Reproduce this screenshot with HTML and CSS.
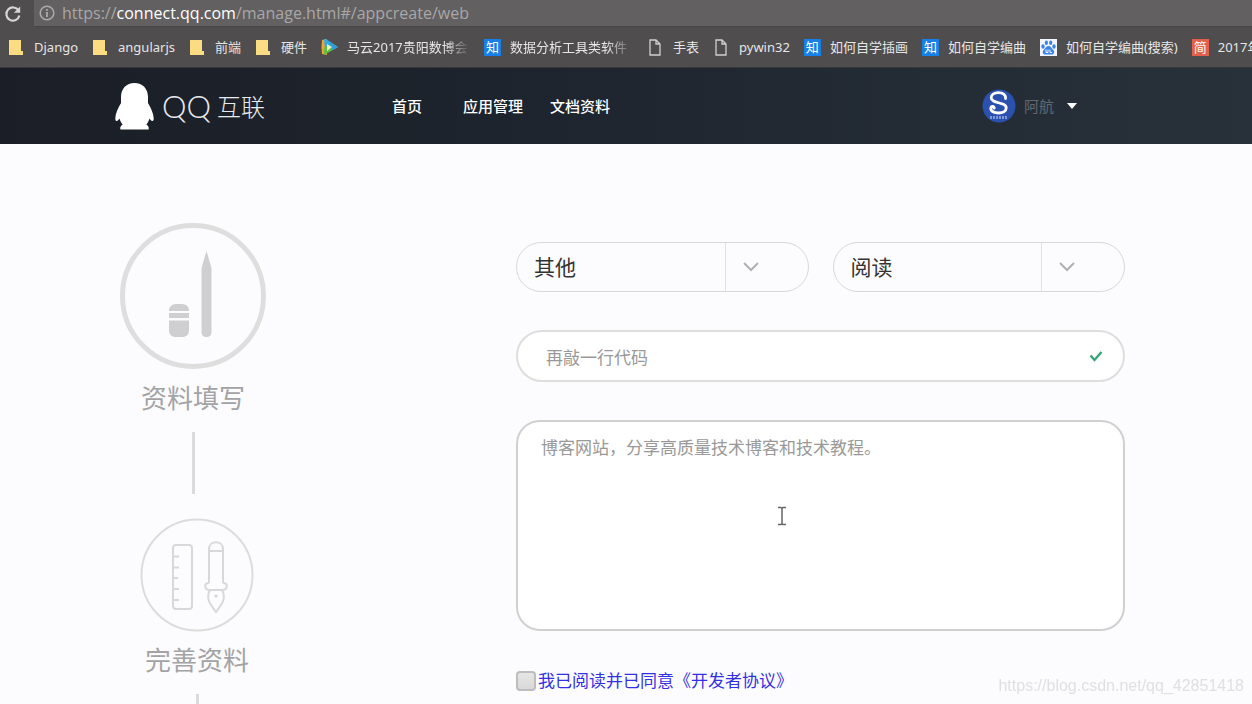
FILE: index.html
```html
<!DOCTYPE html>
<html lang="zh-CN">
<head>
<meta charset="utf-8">
<title>QQ互联</title>
<link rel="stylesheet" href="styles.css">
</head>
<body>
<div class="browser">
  <div class="toolbar">
    <button class="reload" type="button" aria-label="重新加载">
      <svg width="18" height="18" viewBox="0 0 18 18"><path d="M14.6 5.6A6.6 6.6 0 1 0 15.400 10.500" fill="none" stroke="#d6d6d6" stroke-width="2.200"/><path d="M16.200 1.500v6.300h-6.300z" fill="#d6d6d6"/></svg>
    </button>
    <div class="address">
      <svg width="16" height="16" viewBox="0 0 16 16"><circle cx="8" cy="8" r="6.800" fill="none" stroke="#adabac" stroke-width="1.500"/><path d="M8 7v5M8 4v1.800" stroke="#adabac" stroke-width="1.800"/></svg>
      <span class="url">https://<b>connect.qq.com</b>/manage.html#/appcreate/web</span>
    </div>
  </div>
  <nav class="bookmarks" aria-label="书签">
    <a href="#"><svg class="mark" viewBox="0 0 17 17"><path d="M1 1h12v11h2v4H1z" fill="#fbdc83"/></svg><span>Django</span></a>
    <a href="#"><svg class="mark" viewBox="0 0 17 17"><path d="M1 1h12v11h2v4H1z" fill="#fbdc83"/></svg><span>angularjs</span></a>
    <a href="#"><svg class="mark" viewBox="0 0 17 17"><path d="M1 1h12v11h2v4H1z" fill="#fbdc83"/></svg><span>前端</span></a>
    <a href="#"><svg class="mark" viewBox="0 0 17 17"><path d="M1 1h12v11h2v4H1z" fill="#fbdc83"/></svg><span>硬件</span></a>
    <a href="#"><svg class="mark" viewBox="0 0 17 17"><path d="M1 1Q0 8 1 15l5 1V0z" fill="#f0a52c"/><path d="M3 1Q2 0 5 0l6 4-7 6z" fill="#35a8e8"/><path d="M3 16l14-8-6-4-8 5z" fill="#63bd45"/><path d="M9 3l8 5-5 3-5-4z" fill="#2f9ade"/><path d="M6 5l5 3-5 4z" fill="#e8f5b9"/></svg><span class="faded">马云2017贵阳数博会</span></a>
    <a href="#"><i class="mark badge zhi">知</i><span class="faded">数据分析工具类软件</span></a>
    <a href="#"><svg class="mark" viewBox="0 0 17 17"><path d="M3 1h6l4 4v11H3zM9 1v4h4" fill="none" stroke="#d0d0d0" stroke-width="1.300"/></svg><span>手表</span></a>
    <a href="#"><svg class="mark" viewBox="0 0 17 17"><path d="M3 1h6l4 4v11H3zM9 1v4h4" fill="none" stroke="#d0d0d0" stroke-width="1.300"/></svg><span>pywin32</span></a>
    <a href="#"><i class="mark badge zhi">知</i><span>如何自学插画</span></a>
    <a href="#"><i class="mark badge zhi">知</i><span>如何自学编曲</span></a>
    <a href="#"><svg class="mark" viewBox="0 0 17 17"><path d="M0 0h17v17H0z" fill="#f2f6ff"/><g fill="#3b83e8"><ellipse cx="3" cy="7.500" rx="1.700" ry="2.200"/><ellipse cx="6.400" cy="3.800" rx="1.600" ry="2.300"/><ellipse cx="10.700" cy="3.800" rx="1.600" ry="2.300"/><ellipse cx="14" cy="7.500" rx="1.700" ry="2.200"/><path d="M8.500 7c2 0 3 2.200 4.600 3.700 2.300 2.400.6 5.200-1.800 4.900-2-.3-3.600-.3-5.600 0-2.500.3-4.100-2.500-1.800-4.900C5.500 9.200 6.500 7 8.500 7z"/></g><path d="M6 10.500v3h2v-3M10 10.500v3h2" fill="none" stroke="#f2f6ff"/></svg><span>如何自学编曲(搜索)</span></a>
    <a href="#"><i class="mark badge jian">简</i><span>2017年</span></a>
  </nav>
</div>

<header class="site-header">
  <a class="brand" href="#">
    <svg width="39" height="47" viewBox="0 0 39 47"><path d="M19.500 0C27.500 0 33 5.600 33 14v6c2.800 5 5.700 10.300 5.700 15.600 0 3-1.500 3.600-4.200-.1-.7 2.500-1.700 4.300-3.200 5.900 2.200 1.200 2.800 2.800 2.300 5.100H5.400c-.5-2.300.1-3.900 2.300-5.100-1.500-1.600-2.500-3.400-3.200-5.900-2.700 3.700-4.200 3.100-4.200.1C.3 30.300 3.200 25 6 20v-6C6 5.600 11.500 0 19.500 0z" fill="#fff"/></svg>
    <span class="brand-text"><span class="brand-qq">QQ</span><span class="brand-name">互联</span></span>
  </a>
  <nav class="menu">
    <a class="menu-home" href="#">首页</a>
    <a href="#">应用管理</a>
    <a href="#">文档资料</a>
  </nav>
  <button class="account" type="button">
    <svg width="34" height="34" viewBox="0 0 34 34"><circle cx="17" cy="17" r="16.500" fill="#2b51ae"/><path d="M23.500 9.500C24 5.500 20.500 3.700 16.500 3.700c-4.500 0-7.300 2-7.300 5 0 6.300 15 3.800 15 10.300 0 3.300-3.500 5-7.700 5-4.500 0-8-1.700-7.700-4.800.3-2.300 3.500-2.200 3.400 0" fill="none" stroke="#fff" stroke-width="2.800" stroke-linecap="round"/><path d="M8 28.500h18" stroke="#7f98dc" stroke-width="3" stroke-dasharray="2 1"/></svg>
    <span>阿航</span>
    <svg class="caret" width="10" height="6" viewBox="0 0 10 6"><path d="M0 0h10L5 6z" fill="#fff"/></svg>
  </button>
</header>

<main class="content">
  <ol class="steps">
    <li class="step">
      <svg width="148" height="148" viewBox="0 0 148 148"><circle cx="74" cy="74" r="70.500" fill="none" stroke="#dedede" stroke-width="5"/><g fill="#cfcfd1"><path d="M50 89v-1c0-3 3-6 7-6h6c4 0 7 3 7 6v1z"/><path d="M50 91h20v5H50z"/><path d="M50 98.500h20v10c0 4-3 6.500-6.500 6.500h-7c-3.500 0-6.500-2.500-6.500-6.500z"/><path d="M87.500 29L92.500 46v64q0 5-5 5t-5-5V46z"/></g></svg>
      <span class="step-label">资料填写</span>
      <span class="step-line"></span>
    </li>
    <li class="step step-next">
      <svg width="114" height="114" viewBox="0 0 114 114"><circle cx="57" cy="57" r="55.500" fill="none" stroke="#dcdcdc" stroke-width="2"/><g fill="none" stroke="#d8d8d8" stroke-width="2"><rect x="33" y="27" width="19" height="64" rx="3"/><path d="M33 38.500h6M33 49.500h6M33 60h5M33 71h6M33 82h6"/><path d="M69 65V31c0-9 14-9 14 0v34M69 33h14M69 65c-5 0-5 6 0 7h14c5-1 5-7 0-7M70 72c-5 9 1 15 6 22 5-7 11-13 6-22"/></g><circle cx="76" cy="78" r="1.500" fill="#d0d0d0"/></svg>
      <span class="step-label">完善资料</span>
      <span class="step-line"></span>
    </li>
  </ol>

  <form class="form">
    <div class="selects">
      <div class="select">
        <select aria-label="一级分类"><option>其他</option></select>
        <span class="arrow"><svg width="16" height="10" viewBox="0 0 16 10"><path d="M1 1l7 7 7-7" fill="none" stroke="#b0b0b0" stroke-width="2"/></svg></span>
      </div>
      <div class="select">
        <select aria-label="二级分类"><option>阅读</option></select>
        <span class="arrow"><svg width="16" height="10" viewBox="0 0 16 10"><path d="M1 1l7 7 7-7" fill="none" stroke="#b0b0b0" stroke-width="2"/></svg></span>
      </div>
    </div>
    <div class="field">
      <input type="text" aria-label="网站名称" value="再敲一行代码">
      <svg width="14" height="12" viewBox="0 0 14 12"><path d="M1.500 5.500l4 4.500L12.500 2" fill="none" stroke="#35a77c" stroke-width="2.400"/></svg>
    </div>
    <div class="description">
      <textarea aria-label="网站简介">博客网站，分享高质量技术博客和技术教程。</textarea>
      <svg class="cursor" width="10" height="20" viewBox="0 0 10 20"><path d="M1 1.500h3l1 1 1-1h3M5 2.500v15M1 18.500h3l1-1 1 1h3" fill="none" stroke="#666" stroke-width="1.500"/></svg>
    </div>
    <div class="agree">
      <input type="checkbox" id="agree">
      <label for="agree">我已阅读并已同意<a href="#">《开发者协议》</a></label>
    </div>
  </form>
</main>
<div class="watermark">https://blog.csdn.net/qq_42851418</div>
</body>
</html>
```
FILE: styles.css
```css
* {
  box-sizing: border-box;
}

body {
  margin: 0;
  height: 100vh;
  overflow: hidden;
  background: #fcfcfe;
  font-family: "Noto Sans", "Noto Sans CJK SC", sans-serif;
  color: #333;
}

a {
  color: inherit;
  text-decoration: none;
}

button {
  border: 0;
  padding: 0;
  background: none;
  font: inherit;
}

svg {
  display: block;
  flex: none;
}

.browser {
  background: #4f4d4e;
  border-bottom: 1px solid #37373a;
}

.toolbar {
  display: flex;
  height: 27px;
}

.reload {
  width: 34px;
  padding-left: 4px;
}

.address {
  flex: 1;
  display: flex;
  align-items: center;
  gap: 7px;
  padding-left: 5px;
  background: #626061;
  border-bottom: 1px solid #474546;
}

.url {
  font-family: "Open Sans", sans-serif;
  font-size: 16px;
  line-height: 24px;
  color: #a9a7a8;
  white-space: nowrap;
}

.url b {
  font-weight: 500;
  color: #fff;
}

.bookmarks {
  display: flex;
  align-items: center;
  gap: 14px;
  height: 40px;
  padding-left: 8px;
  overflow: hidden;
  font-size: 13px;
  line-height: 20px;
  color: #e6e6e6;
  white-space: nowrap;
}

.bookmarks a {
  display: flex;
  flex: none;
  align-items: center;
  gap: 9px;
}

.mark {
  flex: none;
  width: 17px;
  height: 17px;
}

.badge {
  font-size: 13px;
  font-style: normal;
  line-height: 17px;
  text-align: center;
  color: #fff;
}

.zhi {
  background: #1780e8;
}

.jian {
  background: #e4604b;
}

.faded {
  width: 123px;
  overflow: hidden;
  -webkit-mask-image: linear-gradient(90deg, #000 80%, transparent);
  mask-image: linear-gradient(90deg, #000 80%, transparent);
}

.site-header {
  display: flex;
  align-items: center;
  height: 76px;
  padding: 0 175px 0 115px;
  background: linear-gradient(90deg, #1b1e26, #1e252e 45%, #28313a);
  color: #fff;
}

.brand {
  display: flex;
  align-items: center;
  gap: 8px;
  width: 277px;
}

.brand-text {
  display: flex;
  align-items: center;
  gap: 6px;
  color: #e8eaee;
}

.brand-qq {
  font-family: Lato, sans-serif;
  font-weight: 300;
  font-size: 31px;
  line-height: 40px;
}

.brand-name {
  font-family: "Noto Sans CJK SC", sans-serif;
  font-weight: 300;
  font-size: 24px;
  line-height: 40px;
}

.menu {
  display: flex;
  gap: 27px;
  font-size: 15px;
  font-weight: 500;
  line-height: 24px;
}

.menu-home {
  padding-right: 14px;
}

.account {
  display: flex;
  align-items: center;
  gap: 8px;
  margin-left: auto;
  font-size: 15px;
  line-height: 24px;
  color: #626872;
}

.caret {
  margin-left: 5px;
}

.content {
  display: grid;
  grid-template-columns: 148px minmax(0, 1fr);
  column-gap: 249px;
  padding: 78px 127px 0 119px;
}

.steps {
  margin: 0;
  padding: 0;
  list-style: none;
}

.step {
  display: flex;
  flex-direction: column;
  align-items: center;
}

.step-next {
  padding: 24px 0 0 8px;
}

.step-label {
  margin-top: 8px;
  font-size: 26px;
  line-height: 40px;
  color: #a3a3a5;
}

.step-line {
  width: 3px;
  height: 62px;
  margin-top: 14px;
  background: #dbdadc;
}

.form {
  padding-top: 20px;
}

.selects {
  display: grid;
  grid-template-columns: 1fr 1fr;
  gap: 24px;
}

.select {
  display: grid;
  height: 50px;
  border: 1px solid #d8d8d8;
  border-radius: 25px;
  overflow: hidden;
}

.select select {
  grid-area: 1 / 1;
  appearance: none;
  border: 0;
  padding: 0 90px 0 17px;
  background: transparent;
  font: inherit;
  font-size: 21px;
  color: #333;
}

.arrow {
  grid-area: 1 / 1;
  justify-self: end;
  display: flex;
  align-items: center;
  width: 83px;
  padding-left: 17px;
  border-left: 1px solid #e0e0e0;
  pointer-events: none;
}

.field {
  display: flex;
  align-items: center;
  height: 52px;
  margin-top: 38px;
  padding: 0 20px 0 28px;
  border: 2px solid #dedede;
  border-radius: 26px;
  background: #fff;
}

.field input {
  flex: 1;
  border: 0;
  padding: 0;
  outline: 0;
  background: none;
  font: inherit;
  font-size: 17px;
  color: #999;
}

.description {
  position: relative;
  margin-top: 38px;
}

.description textarea {
  display: block;
  width: 100%;
  height: 211px;
  border: 2px solid #d0d0d0;
  border-radius: 24px;
  padding: 14px 23px;
  background: #fff;
  font: inherit;
  font-size: 17px;
  line-height: 24px;
  color: #999;
  resize: none;
}

.cursor {
  position: absolute;
  top: 86px;
  left: 261px;
}

.agree {
  display: flex;
  align-items: center;
  gap: 2px;
  margin-top: 38px;
  font-size: 17px;
  line-height: 24px;
  color: #3330e4;
}

.agree input {
  appearance: none;
  width: 20px;
  height: 20px;
  margin: 0;
  border: 2px solid #bdbdbd;
  border-radius: 4px;
  background: linear-gradient(#e6e6e6, #d9d9d9);
}

.watermark {
  position: fixed;
  right: 8px;
  bottom: 8px;
  font-family: "Liberation Sans", sans-serif;
  font-size: 16px;
  line-height: 20px;
  color: #e0e0e2;
}
```
